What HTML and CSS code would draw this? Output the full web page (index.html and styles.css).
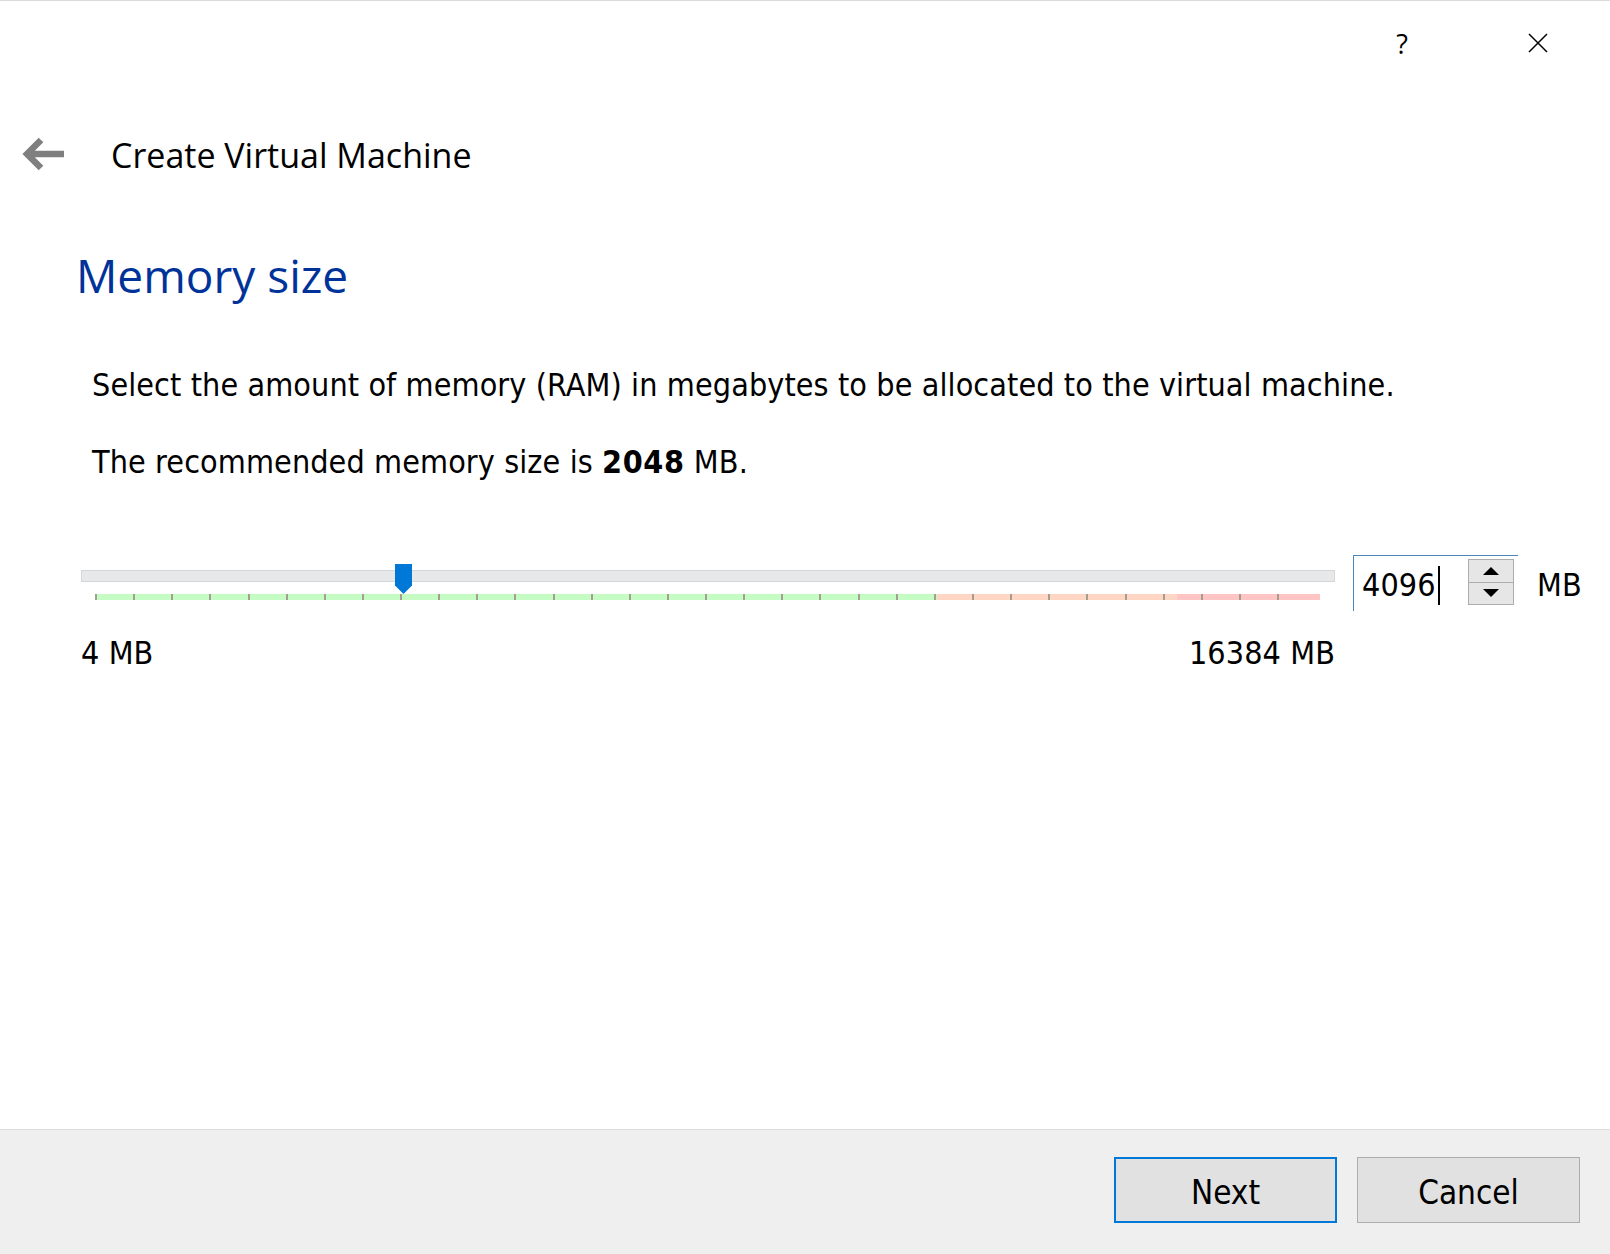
FILE: index.html
```html
<!DOCTYPE html>
<html lang="en">
<head>
<meta charset="utf-8">
<title>Create Virtual Machine</title>
<link rel="stylesheet" href="styles.css">
</head>
<body>
<div class="dialog">
  <div class="titlebar">
    <button class="tb-btn help" type="button">?</button>
    <button class="tb-btn close" type="button" aria-label="Close">
      <svg width="20" height="20" viewBox="0 0 20 20"><path d="M1 1 L19 19 M19 1 L1 19" stroke="#000" stroke-width="1.5" fill="none"/></svg>
    </button>
  </div>
  <div class="header">
    <svg class="back" width="44" height="36" viewBox="0 0 44 36"><path d="M44 18 H8 M21 4 L7 18 L21 32" stroke="#7f7f7f" stroke-width="6.5" fill="none" stroke-linejoin="miter"/></svg>
    <span class="header-title">Create Virtual Machine</span>
  </div>
  <main class="content">
    <h1 class="page-title">Memory size</h1>
    <p class="text first">Select the amount of memory (RAM) in megabytes to be allocated to the virtual machine.</p>
    <p class="text second">The recommended memory size is <b>2048</b> MB.</p>
    <div class="memory-row">
      <div class="slider">
        <div class="track"></div>
        <div class="ticks"></div>
        <div class="handle"></div>
        <div class="scale-labels"><span>4 MB</span><span>16384 MB</span></div>
      </div>
      <div class="spin-group">
        <div class="spinbox">
          <span class="value">4096</span><span class="caret"></span>
          <div class="spin"><span class="spin-btn"><i class="arrow up"></i></span><span class="spin-btn"><i class="arrow down"></i></span></div>
        </div>
        <span class="unit">MB</span>
      </div>
    </div>
  </main>
  <footer class="footer">
    <button class="btn default" type="button">Next</button>
    <button class="btn" type="button">Cancel</button>
  </footer>
</div>
</body>
</html>
```
FILE: styles.css
```css
html, body {
  margin: 0;
  padding: 0;
  background: #fff;
}
.dialog {
  height: 1254px;
  display: flex;
  flex-direction: column;
  border-top: 1px solid #dadada;
  box-sizing: border-box;
  font-family: "DejaVu Sans Condensed", "DejaVu Sans", sans-serif;
  font-stretch: condensed;
  letter-spacing: 0.1px;
  color: #000;
}
.titlebar {
  display: flex;
  justify-content: flex-end;
  gap: 76px;
  padding: 12px 42px 0 0;
  height: 60px;
}
.tb-btn {
  width: 60px;
  height: 60px;
  border: 0;
  background: transparent;
  padding: 0;
  display: flex;
  align-items: center;
  justify-content: center;
}
.help {
  font-family: "Open Sans", sans-serif;
  font-stretch: normal;
  font-size: 27px;
  color: #000;
}
.header {
  display: flex;
  align-items: center;
  height: 60px;
  margin-top: 51px;
  padding-left: 20px;
  gap: 47px;
}
.header-title {
  font-family: "Open Sans", sans-serif;
  font-stretch: normal;
  letter-spacing: 0;
  font-size: 34px;
  line-height: 34px;
  padding-top: 2px;
}
.content {
  flex: 1;
}
.page-title {
  margin: 68px 0 0 76px;
  font-family: "Open Sans", sans-serif;
  font-stretch: normal;
  letter-spacing: 0;
  font-weight: normal;
  font-size: 46px;
  line-height: 46px;
  color: #003399;
}
.text {
  margin: 0 0 0 92px;
  font-size: 32px;
  line-height: 32px;
}
.text b { letter-spacing: 0.6px; }
.text.first { margin-top: 71px; }
.text.second { margin-top: 45px; }
.memory-row {
  display: flex;
  align-items: flex-start;
  margin: 77px 0 0 81px;
}
.slider {
  position: relative;
  width: 1254px;
  padding-top: 15px;
}
.track {
  height: 12px;
  box-sizing: border-box;
  border: 1px solid #d6d6d6;
  background: #e7e8e9;
}
.ticks {
  margin: 12px 0 0 14px;
  width: 1225px;
  height: 6px;
  background:
    repeating-linear-gradient(to right, #a39e8f 0 2px, transparent 2px 38.13px) 0 0 / 1190px 100% no-repeat,
    linear-gradient(to right, #c4fcc4 0 842px, #ffd6c4 842px 1082px, #ffc4c4 1082px) 0 0 / 100% 100% no-repeat;
}
.handle {
  position: absolute;
  left: 314px;
  top: 9px;
  width: 17px;
  height: 30px;
  background: #0078d7;
  clip-path: polygon(0 0, 100% 0, 100% 72%, 50% 100%, 0 72%);
}
.scale-labels {
  display: flex;
  justify-content: space-between;
  margin-top: 37px;
  font-size: 32px;
  line-height: 32px;
}
.spin-group {
  display: flex;
  align-items: center;
  margin-left: 18px;
}
.spinbox {
  width: 165px;
  height: 56px;
  box-sizing: border-box;
  border-left: 1px solid #4a86bb;
  border-top: 1px solid #4a86bb;
  display: flex;
  align-items: center;
  padding: 3px 4px 0 8px;
  font-size: 32px;
  line-height: 32px;
}
.caret {
  display: inline-block;
  width: 2px;
  height: 39px;
  background: #000;
  margin-left: 2px;
}
.spin {
  margin-left: auto;
  align-self: flex-start;
  width: 46px;
  height: 46px;
  box-sizing: border-box;
  border: 1px solid #adadad;
  display: flex;
  flex-direction: column;
}
.spin-btn {
  flex: 1;
  display: flex;
  align-items: center;
  justify-content: center;
  background: #e6e6e6;
}
.spin-btn + .spin-btn {
  border-top: 1px solid #adadad;
}
.arrow {
  width: 0;
  height: 0;
  border-left: 8px solid transparent;
  border-right: 8px solid transparent;
}
.arrow.up { border-bottom: 8px solid #000; }
.arrow.down { border-top: 8px solid #000; }
.unit {
  margin-left: 19px;
  padding-top: 3px;
  font-size: 32px;
  line-height: 32px;
}
.footer {
  height: 125px;
  box-sizing: border-box;
  border-top: 1px solid #dcdcdc;
  background: #efefef;
  display: flex;
  justify-content: flex-end;
  align-items: flex-start;
  gap: 20px;
  padding: 27px 30px 0 0;
}
.btn {
  width: 223px;
  height: 66px;
  box-sizing: border-box;
  border: 1px solid #adadad;
  background: #e1e1e1;
  font-family: "DejaVu Sans Condensed", "DejaVu Sans", sans-serif;
  font-stretch: condensed;
  font-size: 33px;
  color: #000;
  padding: 4px 0 0;
}
.btn.default {
  border: 2px solid #0078d7;
}
```
